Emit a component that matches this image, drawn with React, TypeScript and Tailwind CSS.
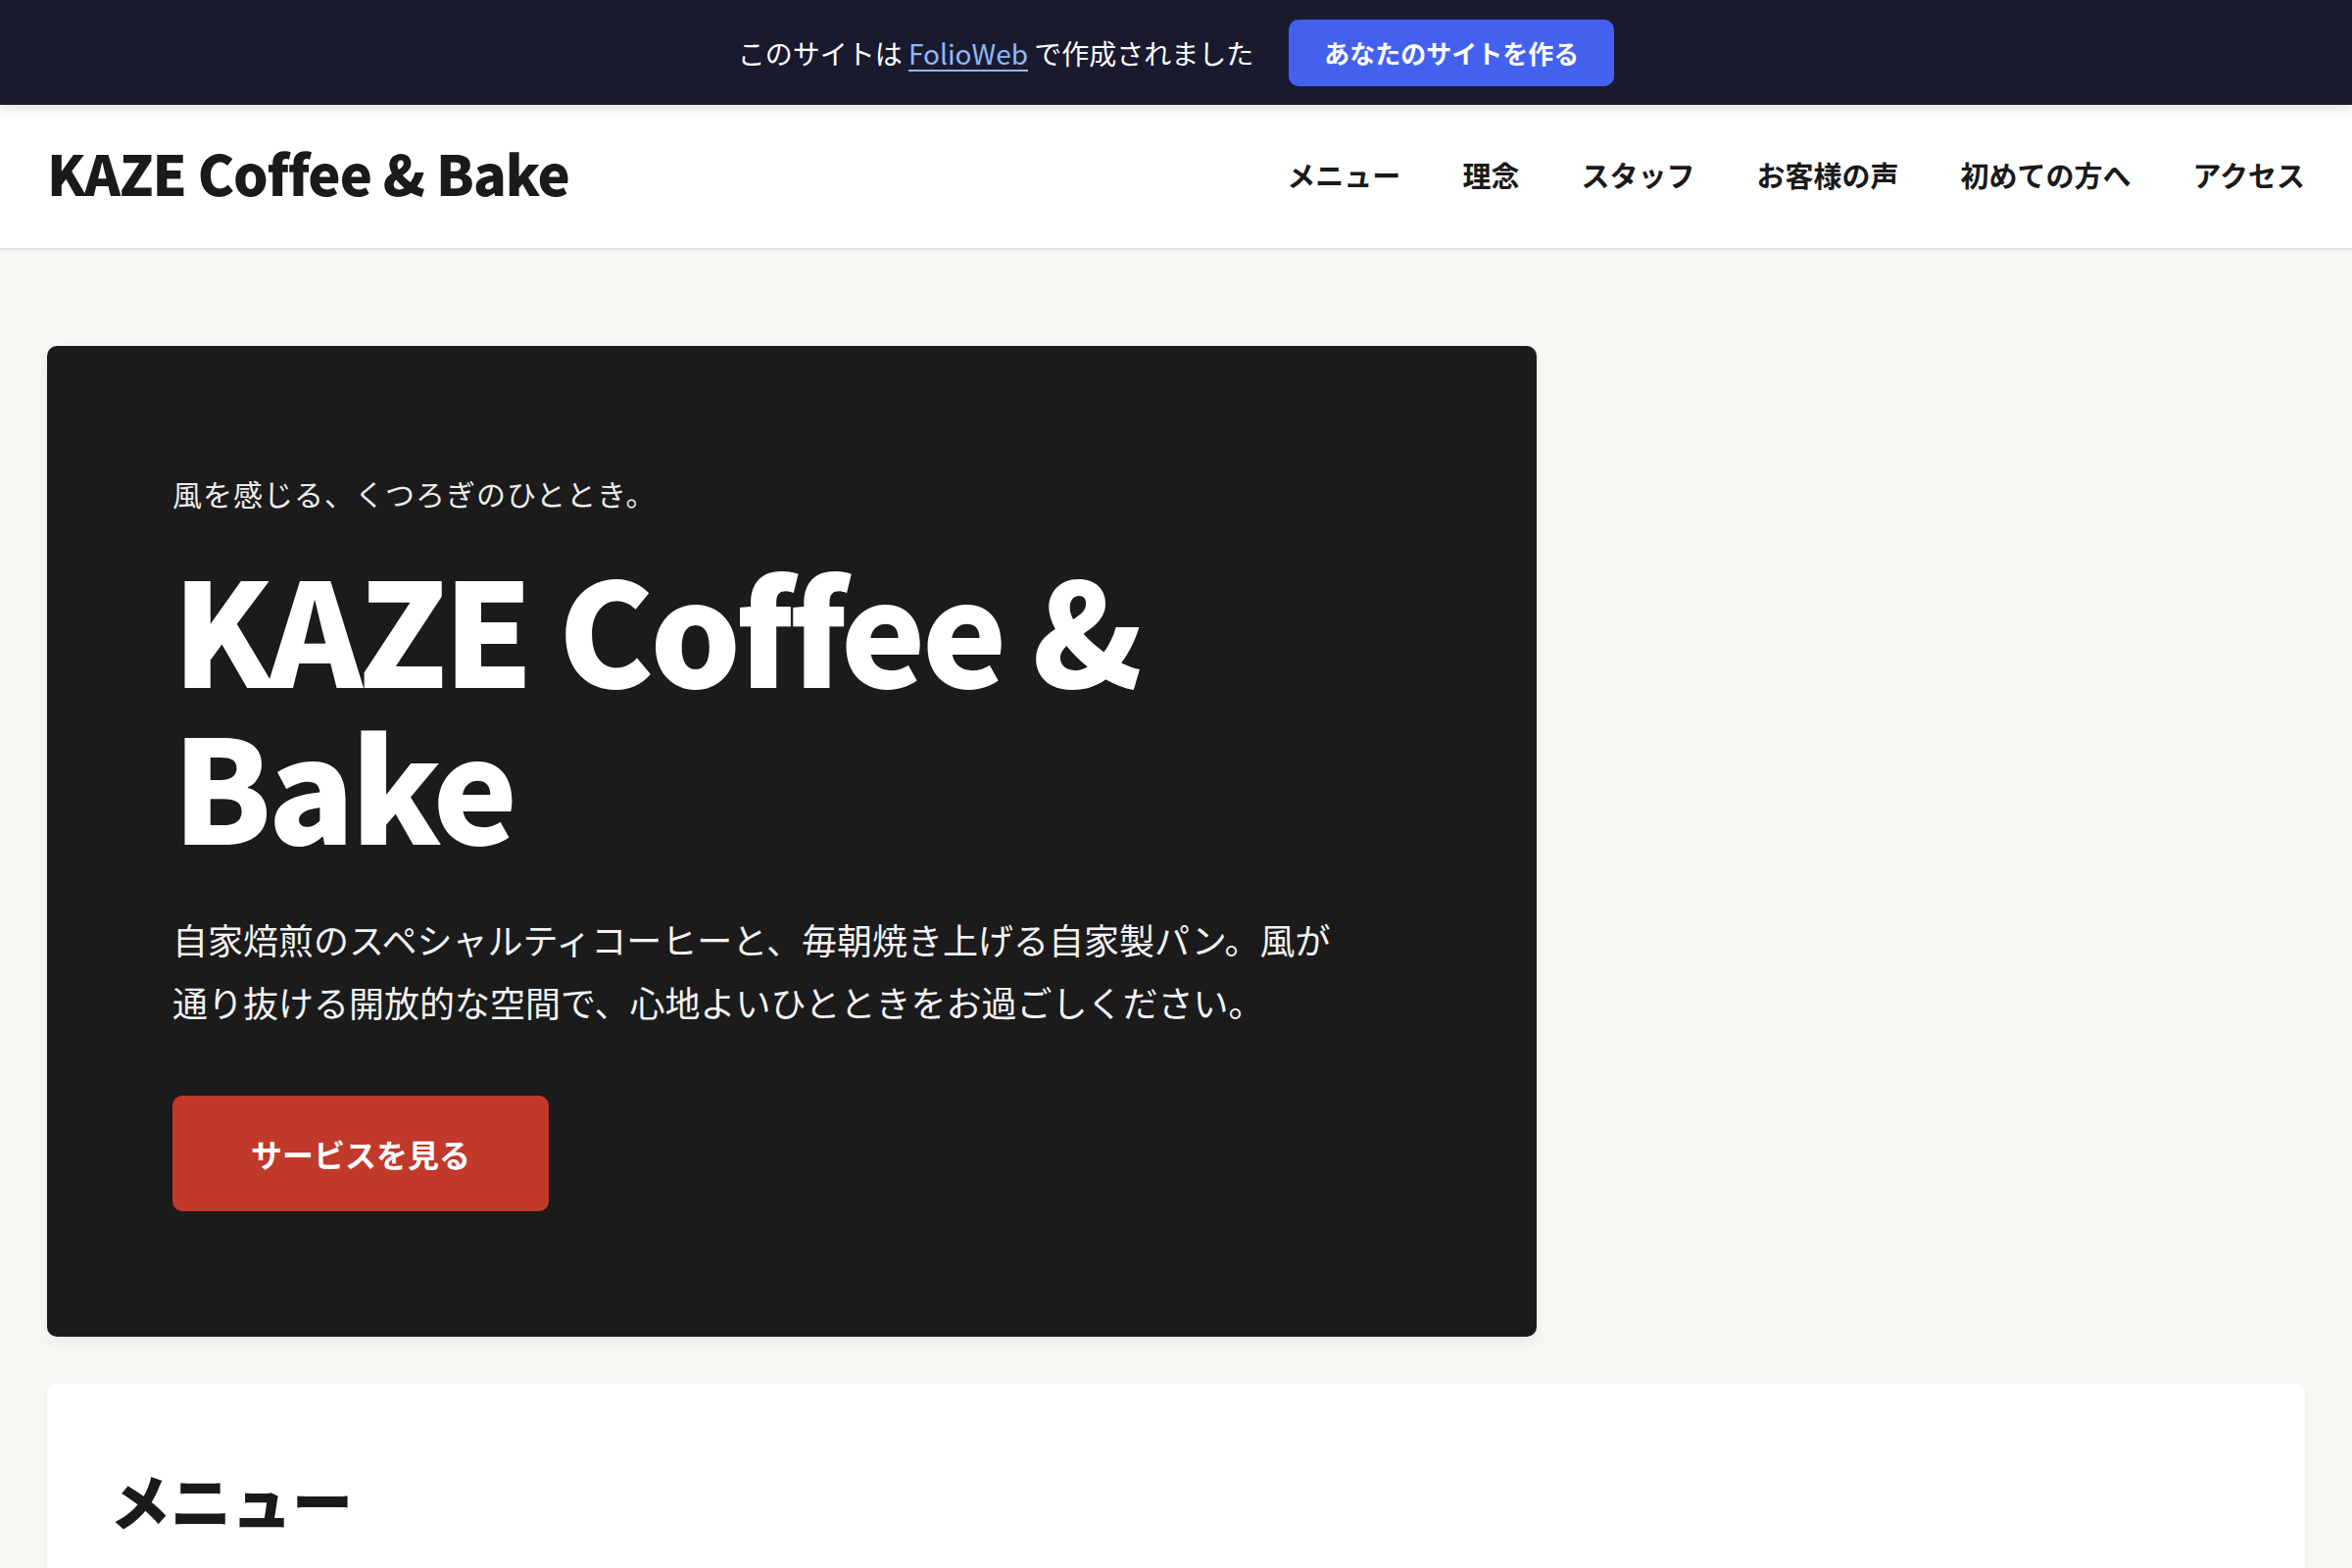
import React from "react";

const navItems = ["メニュー", "理念", "スタッフ", "お客様の声", "初めての方へ", "アクセス"];

export default function App() {
  return (
    <div className="min-h-screen bg-[#f8f8f3] font-['Noto_Sans_CJK_JP','Noto_Sans',sans-serif] text-[#1a1a1a]">
      {/* Top banner */}
      <div className="relative z-10 flex h-[107px] items-center justify-center gap-[36px] bg-[#1a1a2e] shadow-[0_4px_12px_rgba(0,0,0,0.12)]">
        <p className="text-[28px] leading-[42px] text-white">
          このサイトは{" "}
          <a href="#" className="text-[#8fb8f6] underline underline-offset-[5px] decoration-[2px]">
            FolioWeb
          </a>{" "}
          で作成されました
        </p>
        <a
          href="#"
          className="flex h-[68px] items-center rounded-[10px] bg-[#4361ee] px-[36px] text-[26px] font-bold text-white"
        >
          あなたのサイトを作る
        </a>
      </div>

      {/* Header */}
      <header className="flex h-[148px] items-center justify-between border-b-2 border-[#e4e4dc] bg-white px-[48px] pb-[8px]">
        <div className="text-[56px] font-black leading-none tracking-[-1px] text-[#1a1a1a]">KAZE Coffee &amp; Bake</div>
        <nav className="flex items-center gap-[63px] pt-[4px]">
          {navItems.map((item) => (
            <a key={item} href="#" className="text-[29px] font-bold leading-[40px] text-[#1a1a1a]">
              {item}
            </a>
          ))}
        </nav>
      </header>

      {/* Main */}
      <main className="px-[48px] pt-[98px]">
        <section className="w-[1520px] rounded-[10px] bg-[#1b1b1b] p-[128px] shadow-[0_4px_16px_rgba(0,0,0,0.06)]">
          <div className="max-w-[1200px]">
            <p className="text-[30px] leading-[45px] tracking-[1px] text-[#ececec]">風を感じる、くつろぎのひととき。</p>
            <h1 className="mt-[33px] text-[146px] font-black leading-[160px] tracking-[-4px] text-white">
              KAZE Coffee &amp; Bake
            </h1>
            <p className="mt-[47px] text-[36px] leading-[64px] text-[#f2f2f2]">
              自家焙煎のスペシャルティコーヒーと、毎朝焼き上げる自家製パン。風が通り抜ける開放的な空間で、心地よいひとときをお過ごしください。
            </p>
            <a
              href="#"
              className="mt-[64px] inline-flex h-[118px] items-center rounded-[10px] bg-[#c0392b] px-[80px] text-[32px] font-bold text-white"
            >
              サービスを見る
            </a>
          </div>
        </section>

        <section className="mt-[48px] rounded-[10px] bg-white px-[64px] pt-[80px] pb-[120px] shadow-[0_1px_4px_rgba(0,0,0,0.04)]">
          <h2 className="text-[62px] font-black leading-[76px] text-[#1a1a1a]">メニュー</h2>
        </section>
      </main>
    </div>
  );
}
